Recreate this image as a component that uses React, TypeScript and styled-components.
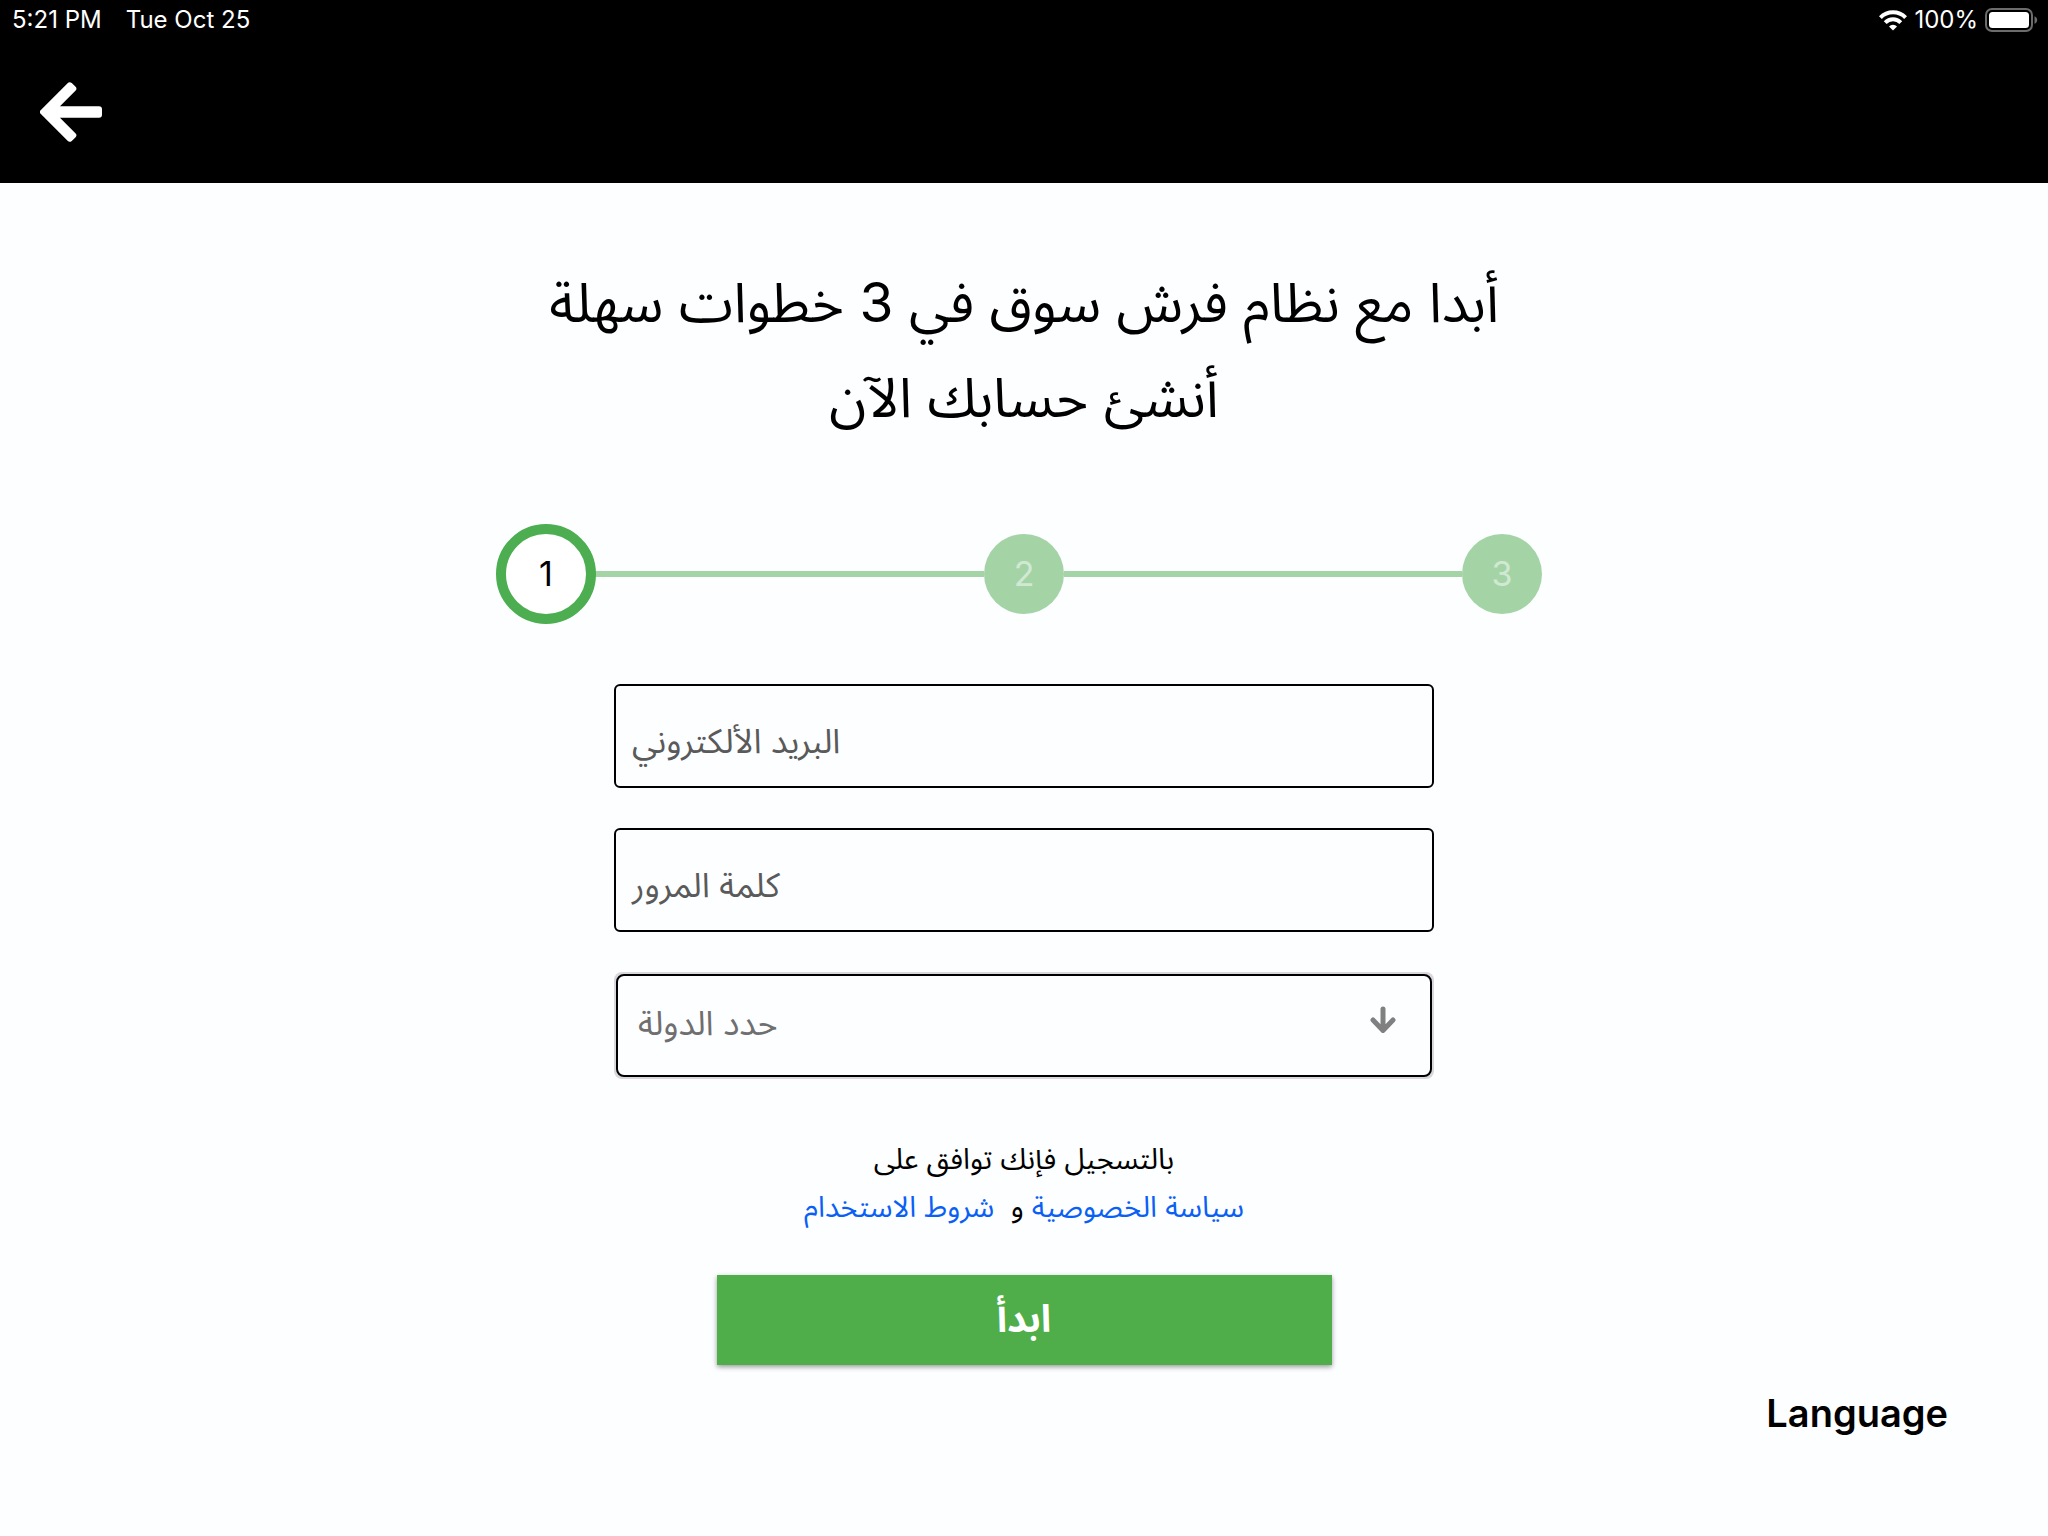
import React, { useState } from "react";
import styled, { createGlobalStyle } from "styled-components";

const latin = `Inter, "Liberation Sans", sans-serif`;
const arabic = `Inter, "Noto Sans Arabic", "DejaVu Sans", sans-serif`;

const GlobalStyle = createGlobalStyle`
  *, *::before, *::after { box-sizing: border-box; }
  body { margin: 0; background: #fdfeff; color: #000; font-family: ${arabic}; }
  button, input, select { font: inherit; color: inherit; }
`;

const Page = styled.div`
  display: flex;
  flex-direction: column;
  min-height: 100vh;
`;

const Header = styled.header`
  background: #000;
  color: #fff;
  padding-bottom: 35px;
`;

const StatusBar = styled.div`
  display: flex;
  align-items: center;
  justify-content: space-between;
  height: 40px;
  padding: 0 10px 0 12px;
  font: 400 24px/40px ${latin};
`;

const StatusGroup = styled.div<{ $gap: number }>`
  display: flex;
  align-items: center;
  gap: ${(p) => p.$gap}px;
`;

const BackButton = styled.button`
  display: block;
  margin: 36px 0 0 32px;
  padding: 6px 8px;
  border: 0;
  background: none;
  cursor: pointer;

  svg { display: block; }
`;

const Main = styled.main`
  display: flex;
  flex-direction: column;
  align-items: center;
  padding: 72px 100px 0;
`;

const Title = styled.h1`
  margin: 0;
  font-size: 55px;
  font-weight: 400;
  line-height: 95px;
  text-align: center;
`;

const Steps = styled.ol`
  display: flex;
  align-items: center;
  width: 100%;
  max-width: 1056px;
  margin: 79px 0 60px;
  padding: 0;
  list-style: none;
`;

const Step = styled.li`
  display: flex;
  align-items: center;

  &:not(:first-child) { flex: 1; }

  &:not(:first-child)::before {
    content: "";
    flex: 1;
    height: 6px;
    margin: 0 -10px;
    background: #a4d4a6;
  }
`;

const StepSlot = styled.span`
  display: flex;
  justify-content: center;
  position: relative;
  z-index: 1;
  width: 100px;
`;

const StepCircle = styled.span<{ $active: boolean }>`
  display: flex;
  align-items: center;
  justify-content: center;
  width: ${(p) => (p.$active ? 100 : 80)}px;
  height: ${(p) => (p.$active ? 100 : 80)}px;
  border: ${(p) => (p.$active ? "10px solid #4cae50" : "0")};
  border-radius: 50%;
  background: ${(p) => (p.$active ? "#fff" : "#a4d4a6")};
  color: ${(p) => (p.$active ? "#000" : "#d1e9d3")};
  font: 400 34px/40px ${latin};
`;

const Form = styled.form`
  display: flex;
  flex-direction: column;
  align-items: center;
  width: 100%;
  max-width: 820px;
`;

const Fields = styled.div`
  display: grid;
  gap: 40px;
  width: 100%;
`;

const Field = styled.div`
  position: relative;
`;

const FieldLabel = styled.label`
  position: absolute;
  top: 0;
  bottom: 0;
  left: 18px;
  display: flex;
  align-items: center;
  padding-top: 10px;
  color: #5a5a5a;
  font-size: 34px;
  line-height: 56px;
  pointer-events: none;
`;

const SelectLabel = styled(FieldLabel)`
  left: 24px;
  padding: 0 0 6px;
  color: #6f6f6f;
`;

const TextInput = styled.input`
  display: block;
  width: 100%;
  height: 104px;
  padding: 8px 16px 0;
  border: 2px solid #000;
  border-radius: 6px;
  background: #fdfeff;
  font-size: 34px;
  outline: none;

  &:not(:placeholder-shown) + ${FieldLabel} { display: none; }
`;

const SelectFrame = styled.div`
  position: relative;
  padding: 2px;
  border-radius: 8px;
  background: #d9d6de;

  svg {
    position: absolute;
    top: 34px;
    right: 38px;
    pointer-events: none;
  }
`;

const CountrySelect = styled.select`
  display: block;
  width: 100%;
  height: 103px;
  padding: 0 80px 0 20px;
  border: 2px solid #000;
  border-radius: 8px;
  appearance: none;
  background: #fdfeff;
  color: #6f6f6f;
  font-size: 34px;
  outline: none;
`;

const Terms = styled.p`
  margin: 56px 0 44px;
  font-size: 29px;
  line-height: 48px;
  text-align: center;
`;

const TermsLink = styled.a`
  color: #0a60f5;
  text-decoration: none;
`;

const SubmitButton = styled.button`
  width: 75%;
  height: 90px;
  padding: 0 0 4px;
  border: 0;
  background: #4fae4a;
  box-shadow: 0 2px 5px rgba(0, 0, 0, 0.4);
  color: #fff;
  font-size: 38px;
  font-weight: 700;
  line-height: 48px;
  cursor: pointer;
`;

const LanguageButton = styled.button`
  align-self: flex-end;
  margin-top: 24px;
  padding: 0;
  border: 0;
  background: none;
  font: 600 38px/48px ${latin};
  cursor: pointer;
`;

const WifiIcon = () => (
  <svg width="28" height="21" viewBox="0 0 28 21" aria-hidden="true">
    <g fill="none" stroke="#fff" strokeWidth="4">
      <path d="M1.4 7.6a17.8 17.8 0 0 1 25.2 0" />
      <path d="M6.2 12.6a11 11 0 0 1 15.6 0" />
    </g>
    <path d="M14 20.6l-4-4.2a5.8 5.8 0 0 1 8 0z" fill="#fff" />
  </svg>
);

const BatteryIcon = () => (
  <svg width="53" height="24" viewBox="0 0 53 24" aria-hidden="true">
    <rect x="1" y="1" width="46" height="22" rx="6" fill="none" stroke="#6c6c6c" strokeWidth="2" />
    <rect x="4" y="4" width="40" height="16" rx="3.5" fill="#fff" />
    <path d="M49.5 8.2c3.6 1.4 3.6 6.2 0 7.6z" fill="#6c6c6c" />
  </svg>
);

const BackIcon = () => (
  <svg width="62" height="60" viewBox="0 0 62 60" aria-hidden="true">
    <path
      d="M3 30L29.7 3.3l3.6 3.4L12.6 27.3H59v5.4H12.6l20.7 20.6-3.6 3.4z"
      fill="#fff"
      stroke="#fff"
      strokeWidth="6"
      strokeLinejoin="round"
    />
  </svg>
);

const DownIcon = () => (
  <svg width="26" height="28" viewBox="0 0 26 28" aria-hidden="true">
    <path
      d="M13 3v21M3 14l10 10.4L23 14"
      fill="none"
      stroke="#808080"
      strokeWidth="5"
      strokeLinecap="round"
      strokeLinejoin="round"
    />
  </svg>
);

const steps = [1, 2, 3];
const countries = ["السعودية", "الإمارات", "مصر"];

export default function App() {
  const [country, setCountry] = useState("");

  return (
    <Page>
      <GlobalStyle />
      <Header>
        <StatusBar>
          <StatusGroup $gap={24}>
            <span>5:21 PM</span>
            <span>Tue Oct 25</span>
          </StatusGroup>
          <StatusGroup $gap={7}>
            <WifiIcon />
            <span>100%</span>
            <BatteryIcon />
          </StatusGroup>
        </StatusBar>
        <BackButton type="button" aria-label="رجوع">
          <BackIcon />
        </BackButton>
      </Header>

      <Main>
        <Title dir="rtl">
          أبدا مع نظام فرش سوق في 3 خطوات سهلة
          <br />
          أنشئ حسابك الآن
        </Title>

        <Steps>
          {steps.map((n) => (
            <Step key={n} aria-current={n === 1 ? "step" : undefined}>
              <StepSlot>
                <StepCircle $active={n === 1}>{n}</StepCircle>
              </StepSlot>
            </Step>
          ))}
        </Steps>

        <Form onSubmit={(e) => e.preventDefault()}>
          <Fields>
            <Field>
              <TextInput id="email" type="email" placeholder=" " />
              <FieldLabel htmlFor="email">البريد الألكتروني</FieldLabel>
            </Field>
            <Field>
              <TextInput id="password" type="password" placeholder=" " />
              <FieldLabel htmlFor="password">كلمة المرور</FieldLabel>
            </Field>
            <Field>
              <SelectFrame>
                <CountrySelect
                  id="country"
                  aria-label="حدد الدولة"
                  value={country}
                  onChange={(e) => setCountry(e.target.value)}
                >
                  <option value="" />
                  {countries.map((name) => (
                    <option key={name} value={name}>
                      {name}
                    </option>
                  ))}
                </CountrySelect>
                <DownIcon />
              </SelectFrame>
              {country === "" && <SelectLabel htmlFor="country">حدد الدولة</SelectLabel>}
            </Field>
          </Fields>

          <Terms dir="rtl">
            بالتسجيل فإنك توافق على
            <br />
            <TermsLink href="#privacy">سياسة الخصوصية</TermsLink>
            {" و\u00a0 "}
            <TermsLink href="#terms">شروط الاستخدام</TermsLink>
          </Terms>

          <SubmitButton type="submit">ابدأ</SubmitButton>
        </Form>

        <LanguageButton type="button">Language</LanguageButton>
      </Main>
    </Page>
  );
}
